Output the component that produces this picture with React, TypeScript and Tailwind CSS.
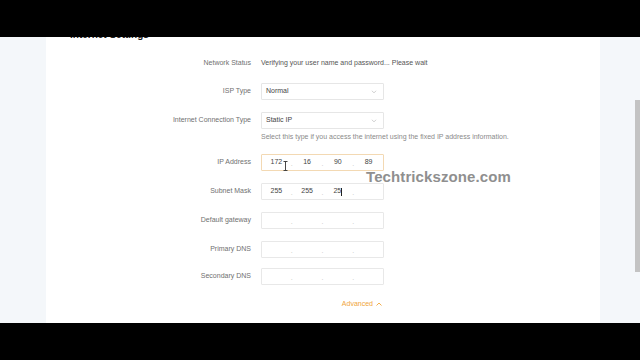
import React from "react";

const font = { fontFamily: '"Liberation Sans", Arial, sans-serif' };

function Chevron() {
  return (
    <svg width="6" height="4" viewBox="0 0 6 4" className="shrink-0">
      <path d="M0.8 0.8 L3 2.8 L5.2 0.8" fill="none" stroke="#c6c6c6" strokeWidth="0.8" />
    </svg>
  );
}

function SelectBox({ value }: { value: string }) {
  return (
    <div className="w-[123px] h-[17px] border border-[#e6e6e6] rounded-[1px] flex items-center justify-between pl-[4px] pr-[6px] text-[7px] text-[#444]">
      <span>{value}</span>
      <Chevron />
    </div>
  );
}

function IpBox({
  values,
  focused,
  caretAt,
}: {
  values: string[];
  focused?: boolean;
  caretAt?: number;
}) {
  return (
    <div
      className={
        "w-[123px] h-[17px] border rounded-[1px] flex items-center text-[7px] text-[#444] " +
        (focused ? "border-[#f3d9b3]" : "border-[#e8e8e8]")
      }
    >
      {[0, 1, 2, 3].map((i) => (
        <React.Fragment key={i}>
          <div className="flex-1 flex items-center justify-center h-full">
            <span>{values[i] ?? ""}</span>
            {caretAt === i && <span className="inline-block w-[1px] h-[8px] bg-[#222]" />}
          </div>
          {i < 3 && <span className="text-[#c4c4c4] text-[7px] leading-none translate-y-[1px]">.</span>}
        </React.Fragment>
      ))}
    </div>
  );
}

function Row({ label, children, className }: { label: string; children: React.ReactNode; className: string }) {
  return (
    <div className={"flex items-center h-[17px] " + className}>
      <div className="w-[205px] text-right text-[7px] text-[#707070]">{label}</div>
      <div className="ml-[10px] flex items-center">{children}</div>
    </div>
  );
}

export default function App() {
  return (
    <div className="w-[640px] h-[360px] bg-black flex flex-col overflow-hidden" style={font}>
      <div className="h-[37px] bg-black shrink-0" />
      <div className="h-[286px] flex shrink-0">
        <div className="w-[46px] bg-[#f4f7fa]" />
        <div className="w-[554px] bg-white relative overflow-hidden">
          <div className="flex flex-col">
            <div className="mt-[-8px] h-[12px] pl-[24px] text-[10px] leading-[12px] font-bold text-[#222]">
              Internet Settings
            </div>
            <Row label="Network Status" className="mt-[14px]">
              <span className="text-[7px] text-[#555]">Verifying your user name and password... Please wait</span>
            </Row>
            <Row label="ISP Type" className="mt-[11px]">
              <SelectBox value="Normal" />
            </Row>
            <Row label="Internet Connection Type" className="mt-[12px]">
              <SelectBox value="Static IP" />
            </Row>
            <div className="mt-[3px] h-[10px] flex items-center pl-[215px] text-[7px] text-[#8a8a8a]">
              Select this type if you access the internet using the fixed IP address information.
            </div>
            <Row label="IP Address" className="mt-[12px]">
              <IpBox values={["172", "16", "90", "89"]} focused />
            </Row>
            <Row label="Subnet Mask" className="mt-[12px]">
              <IpBox values={["255", "255", "25", ""]} caretAt={2} />
            </Row>
            <Row label="Default gateway" className="mt-[12px]">
              <IpBox values={[]} />
            </Row>
            <Row label="Primary DNS" className="mt-[12px]">
              <IpBox values={[]} />
            </Row>
            <Row label="Secondary DNS" className="mt-[10px]">
              <IpBox values={[]} />
            </Row>
            <div className="mt-[14px] h-[10px] flex items-center justify-end w-[336px] gap-[3px] text-[7px] text-[#f0a53a]">
              <span>Advanced</span>
              <svg width="6" height="4" viewBox="0 0 6 4">
                <path d="M0.5 3.5 L3 1 L5.5 3.5" fill="none" stroke="#f0a53a" strokeWidth="0.9" />
              </svg>
            </div>
          </div>

          {/* mouse I-beam cursor */}
          <svg className="absolute left-[237px] top-[124px]" width="5" height="10" viewBox="0 0 5 10">
            <path d="M0.5 0.5 H4.5 M2.5 0.5 V9.5 M0.5 9.5 H4.5" stroke="#333" strokeWidth="0.9" fill="none" />
          </svg>

          {/* watermark */}
          <div className="absolute left-[320px] top-[132px] text-[15px] leading-[16px] font-bold text-[#8f8f8f] tracking-[0.1px] [text-shadow:0_0_2px_#ffffff,0_0_1px_#ffffff]">
            Techtrickszone.com
          </div>
        </div>
        <div className="w-[40px] bg-[#f4f7fa] relative">
          <div className="absolute right-0 top-[63px] w-[5px] h-[172px] bg-[#c3c3c3]" />
        </div>
      </div>
      <div className="flex-1 bg-black" />
    </div>
  );
}
